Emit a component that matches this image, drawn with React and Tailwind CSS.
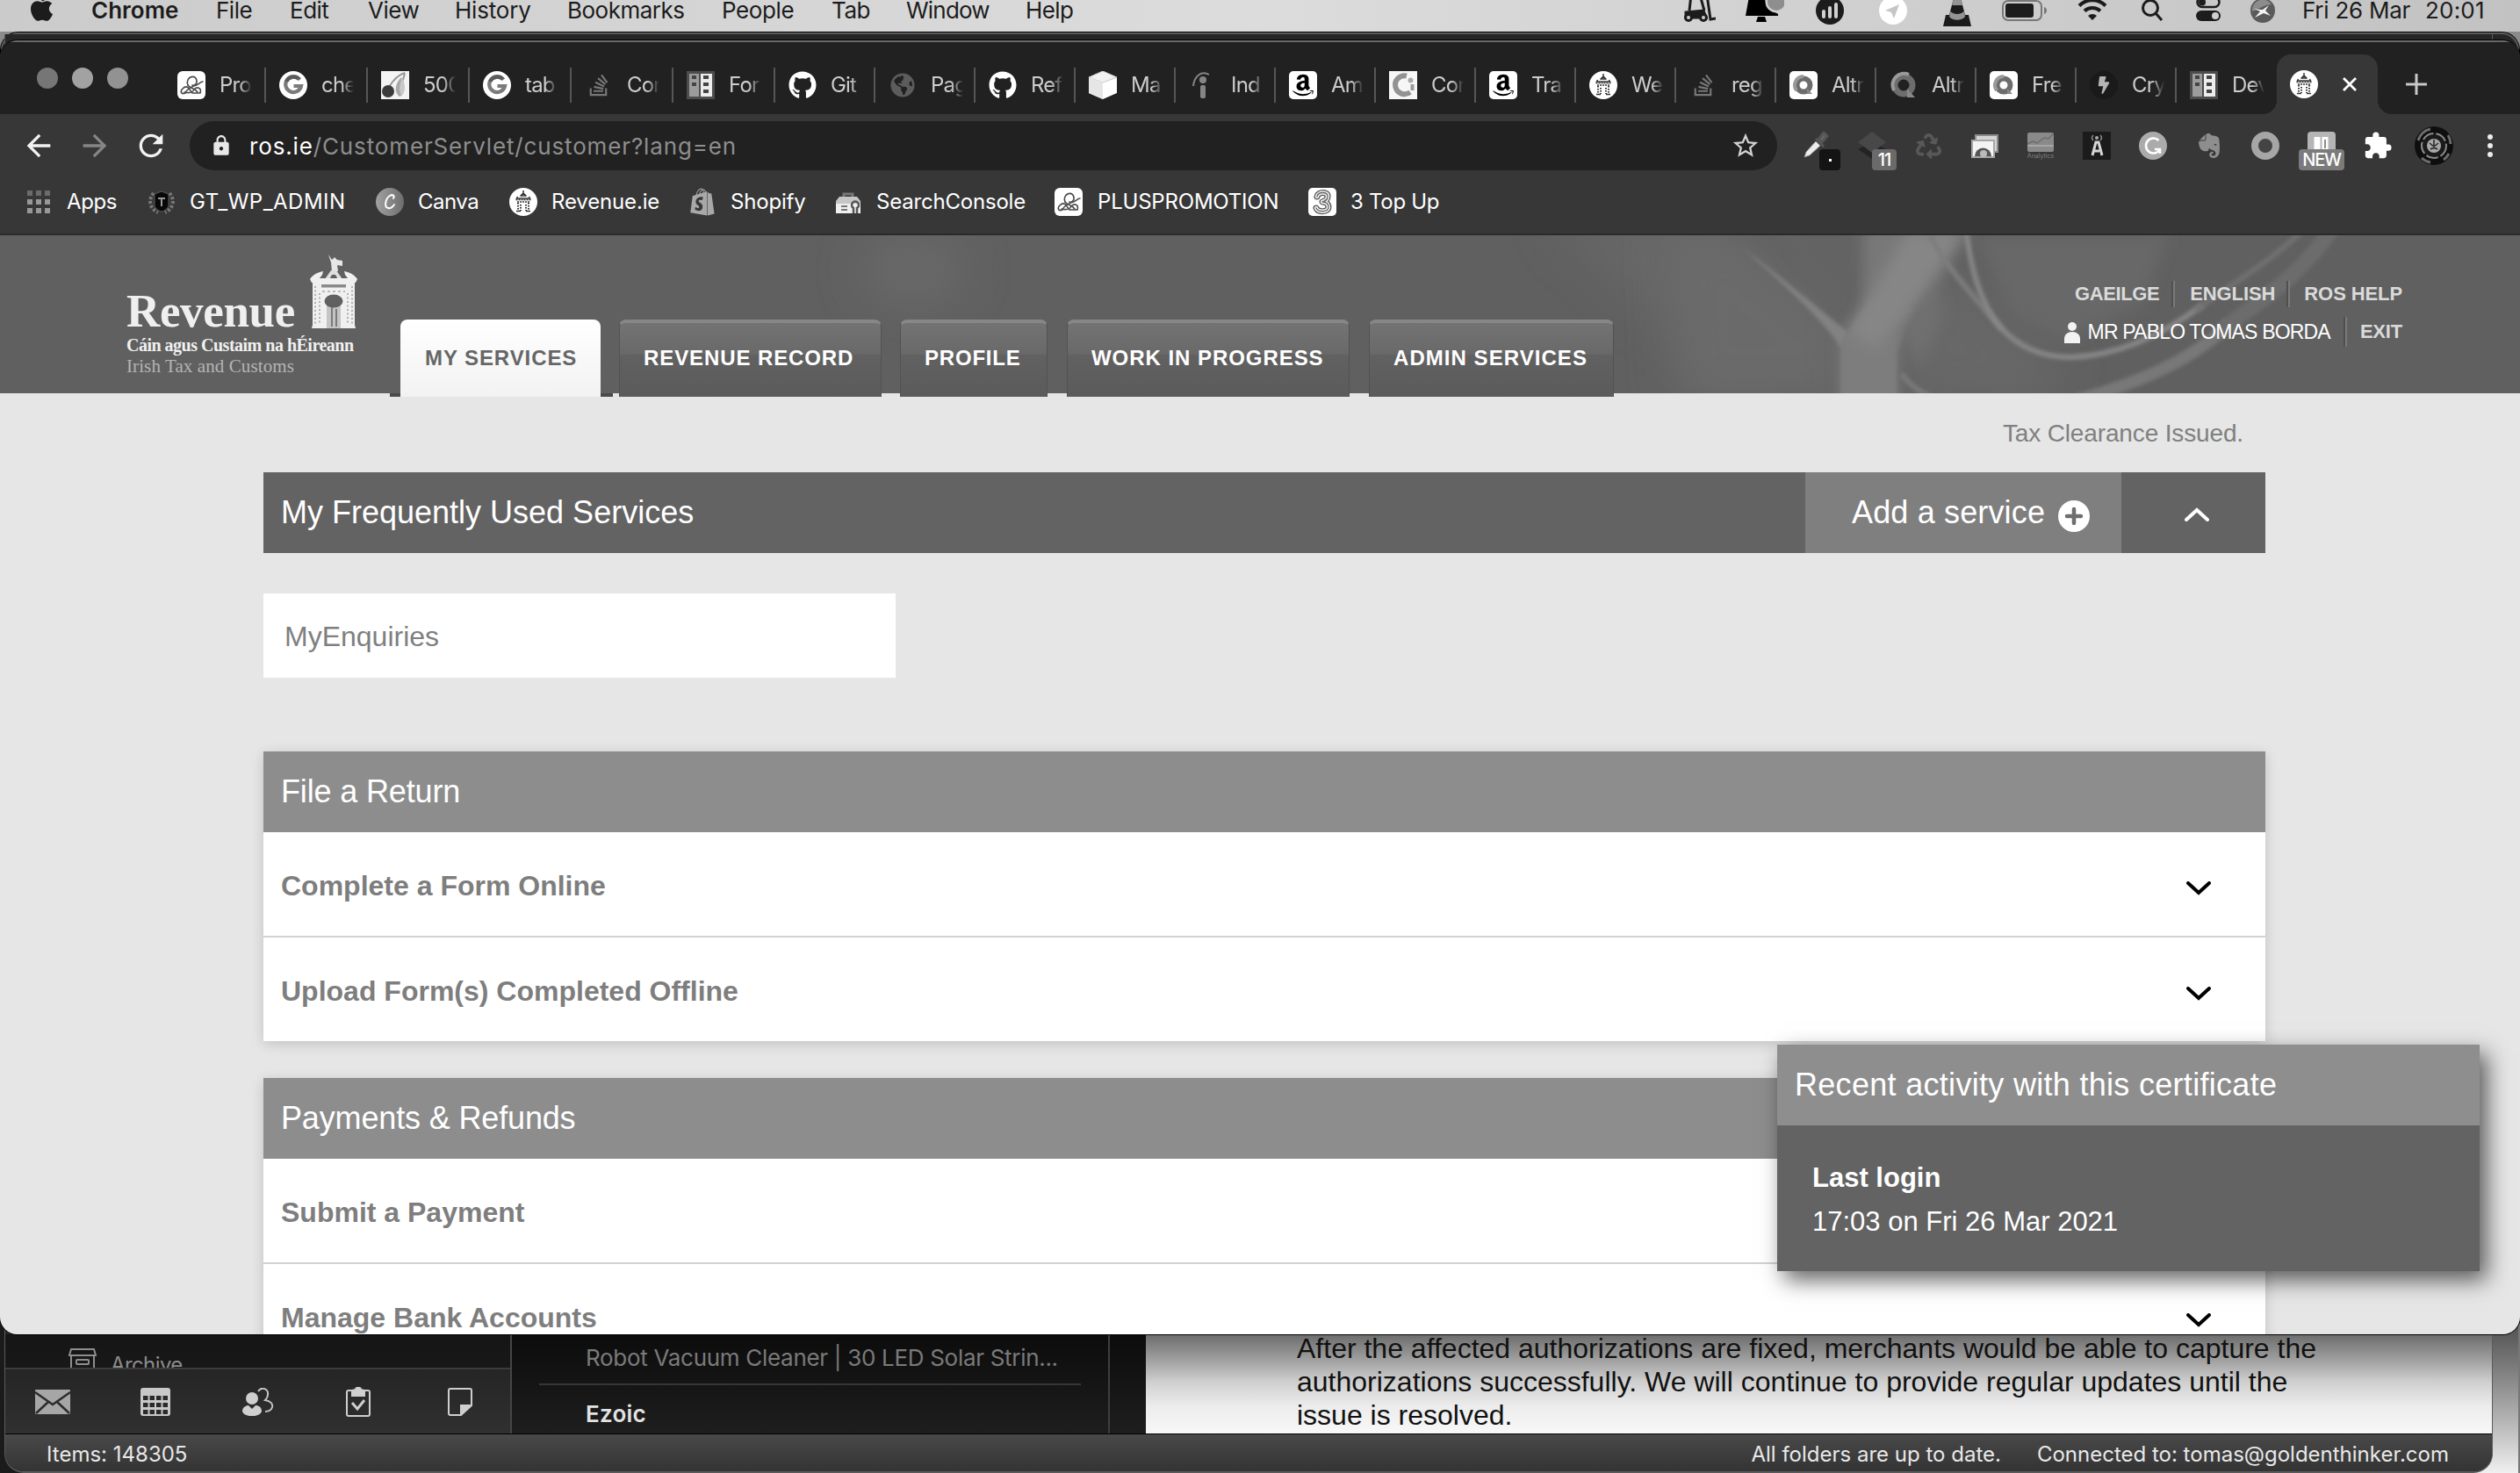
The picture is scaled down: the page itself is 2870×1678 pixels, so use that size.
import React from "react";
import {
  FaApple,
  FaGithub,
  FaStackOverflow,
  FaAmazon,
  FaRecycle,
  FaEvernote,
  FaShopify,
  FaBolt,
  FaGlobeAmericas,
} from "react-icons/fa";
import { MdArrowBack, MdArrowForward, MdRefresh, MdStarBorder, MdExtension, MdLock } from "react-icons/md";

/* ---------- drawings ---------- */

function Gate() {
  return (
    <span className="flex size-8 items-center justify-center rounded-full bg-white">
      <svg viewBox="0 0 32 32" className="size-8" fill="none" stroke="#333" strokeWidth="1.5">
        <path d="M16 3v4M12.500 9.500L16 6l3.500 3.500M9.500 10l-1 2h15l-1-2M13 9h6" />
        <path d="M7.500 13.500h17M9 16h14" strokeDasharray="2 1" />
        <path strokeDasharray="1.500 1.500" strokeWidth="2" d="M10 17v9M13 19v7M19 19v7M22 17v9" />
        <path d="M8 26.500h5M19 26.500h5" />
      </svg>
    </span>
  );
}

function Knot() {
  return (
    <svg viewBox="0 0 32 32" className="size-8">
      <rect width="32" height="32" rx="6" fill="#fff" />
      <g fill="none" stroke="#4a4a4a" strokeWidth="1.6" strokeLinecap="round" strokeLinejoin="round">
        <path d="M12 16c-4-10 11-14 10-3-1 5-12 6-13 12-5 2-6-2-3-5s6-3 8 1l3 4h9c2-6-4-8-7-4-2 4-7 4-11 3" />
        <path d="M17 16c5 3 8-4 12-4M12 16c3 4 8 3 11 8" />
      </g>
    </svg>
  );
}

function Google() {
  return (
    <svg viewBox="0 0 32 32" className="size-8">
      <circle cx="16" cy="16" r="16" fill="#fff" />
      <path d="M23.500 9.800A9 9 0 1 0 25 17h-8.500" fill="none" stroke="#7b7b7b" strokeWidth="4.200" />
      <path d="M8.200 12A9 9 0 0 1 22.500 9" fill="none" stroke="#5b5b5b" strokeWidth="4.200" />
    </svg>
  );
}

function Pear() {
  return (
    <svg viewBox="0 0 32 32" className="size-8">
      <rect width="32" height="32" fill="#f4f4f4" />
      <path d="M27 2C20 4 14 10 9 18M27 2c-1 6-3 10-4 14" stroke="#999" strokeWidth="2" fill="none" />
      <circle cx="8" cy="23" r="7" fill="#3b3b3b" />
      <path d="M23 7c-8 8-8 18-2 22 7-2 7-14 2-22z" fill="#a8a8a8" />
      <path d="M24 8c-3 6-4 14-1 20 5-4 5-12 1-20z" fill="#c9c9c9" />
    </svg>
  );
}

function Panels() {
  return (
    <svg viewBox="0 0 32 32" className="size-8">
      <rect width="32" height="32" fill="#4d4d4d" />
      <rect x="3" y="3" width="11" height="26" fill="#9c9c9c" />
      <rect x="16" y="3" width="13" height="26" fill="#ededed" />
      <g fill="#444">
        <rect x="6" y="5" width="5" height="4" />
        <rect x="6" y="13" width="5" height="4" />
        <rect x="19" y="5" width="6" height="4" />
        <rect x="19" y="13" width="6" height="4" />
        <rect x="19" y="21" width="6" height="4" />
      </g>
    </svg>
  );
}

function Cube() {
  return (
    <svg viewBox="0 0 32 32" className="size-8">
      <path d="M16 0l16 7v18l-16 7L0 25V7z" fill="#fff" />
      <path d="M0 7l16 6 16-6L16 0z" fill="#f2f2f2" stroke="#c6c6c6" />
      <path d="M0 7l16 6v19L0 25z" fill="#e6e6e6" />
    </svg>
  );
}

function Indeed() {
  return (
    <svg viewBox="0 0 32 32" className="size-8">
      <circle cx="16" cy="10" r="4" fill="#858585" />
      <rect x="13" y="16" width="6" height="15" rx="2" fill="#858585" />
      <path d="M5 17C6 6 14-1 23 4" fill="none" stroke="#858585" strokeWidth="2" />
    </svg>
  );
}

function Amazon() {
  return (
    <span className="flex size-8 items-center justify-center rounded-[5px] bg-white text-black">
      <FaAmazon className="size-[28px]" />
    </span>
  );
}

function CRing() {
  return (
    <svg viewBox="0 0 32 32" className="size-8">
      <rect width="32" height="32" fill="#f6f6f6" />
      <path d="M20 5.500A10.500 10.500 0 1 0 24 24" fill="none" stroke="#929292" strokeWidth="6" />
      <circle cx="24.500" cy="10.500" r="3" fill="#aaa" />
      <path d="M26.500 15v7" stroke="#999" strokeWidth="4" />
    </svg>
  );
}

function Swirl({ boxed }) {
  return (
    <svg viewBox="0 0 32 32" className="size-8">
      {boxed && <rect width="32" height="32" rx="5" fill="#fff" />}
      <circle cx="16" cy="16" r={boxed ? 7.5 : 10} fill="none" stroke="#6d6d6d" strokeWidth={boxed ? 6 : 7} />
      <path
        d={boxed ? "M8 22a10 10 0 0 1 8-16" : "M5 22A13 13 0 0 1 22 4"}
        fill="none"
        stroke="#9a9a9a"
        strokeWidth="4"
      />
      <path d={boxed ? "M20 20l6 6h-6z" : "M20 20l9 10h-9z"} fill="#888" />
    </svg>
  );
}

function Bolt() {
  return (
    <span className="flex size-8 items-center justify-center rounded-full bg-[#1a1a1a] text-[#b5b5b5]">
      <FaBolt className="size-[20px]" />
    </span>
  );
}

const favicons = {
  knot: <Knot />,
  google: <Google />,
  pear: <Pear />,
  stack: <FaStackOverflow className="size-[28px] text-[#777]" />,
  panels: <Panels />,
  github: <FaGithub className="size-8 text-white" />,
  globe: <FaGlobeAmericas className="size-[28px] text-[#5c5c5c]" />,
  cube: <Cube />,
  indeed: <Indeed />,
  amazon: <Amazon />,
  cring: <CRing />,
  gate: <Gate />,
  swirlBox: <Swirl boxed />,
  swirl: <Swirl />,
  bolt: <Bolt />,
};

/* ---------- macOS menu bar ---------- */

const menus = [
  ["File", "w-[84px] tracking-[-0.5px]"],
  ["Edit", "w-[89px] tracking-[-0.5px]"],
  ["View", "w-[99px] tracking-[-0.5px]"],
  ["History", "w-[128px] tracking-[-0.2px]"],
  ["Bookmarks", "w-[176px] tracking-[-0.5px]"],
  ["People", "w-[125px] tracking-[-0.4px]"],
  ["Tab", "w-[85px] tracking-[-0.5px]"],
  ["Window", "w-[136px] tracking-[-0.8px]"],
  ["Help", "w-[80px] tracking-[-0.6px]"],
];

function Slot({ className, children }) {
  return <div className={`flex shrink-0 items-center justify-center ${className}`}>{children}</div>;
}

function MenuBar() {
  return (
    <div className="h-9 w-full bg-linear-to-r from-[#cbcbcb] via-[#dcdcdc] to-[#c2c2c2]">
      <div className="flex h-6 items-center text-[26px] leading-[24px] text-[#1c1c1c]">
        <div className="flex w-[104px] shrink-0 pl-[33px]">
          <FaApple className="-mt-[6px] h-[34px] w-[29px]" />
        </div>
        <div className="w-[142px] font-semibold">Chrome</div>
        {menus.map(([m, c]) => (
          <div key={m} className={`shrink-0 ${c}`}>
            {m}
          </div>
        ))}
        <div className="ml-auto flex h-6 shrink-0 items-center">
          <Slot className="w-[72px]">
            <svg viewBox="0 0 36 32" className="-mt-1 h-8 w-9" fill="none" stroke="#1c1c1c" strokeWidth="3">
              <path d="M6 18L8 0h10l5 18M26 0l4 28 6-1" />
              <path d="M2 20l20-2 3 8H2z" fill="#1c1c1c" />
              <circle cx="5" cy="26" r="3.500" fill="#d0d0d0" />
              <circle cx="22" cy="26" r="3.500" fill="#d0d0d0" />
            </svg>
          </Slot>
          <Slot className="w-[76px]">
            <svg viewBox="0 0 44 32" className="h-8 w-11">
              <path d="M4 0h17l4 12 12 8v2H0z M14 23h8l2 6H12z" fill="#000" />
              <circle cx="35" cy="6" r="12.500" fill="#d0d0d0" />
              <circle cx="35" cy="6" r="10" fill="#8e8e8e" />
            </svg>
          </Slot>
          <Slot className="w-[71px]">
            <svg viewBox="0 0 32 32" className="size-8">
              <circle cx="16" cy="16" r="16" fill="#1c1c1c" />
              <path d="M9 17v6M16 13v10M23 9v14" stroke="#d0d0d0" strokeWidth="4" strokeLinecap="round" />
            </svg>
          </Slot>
          <Slot className="w-[73px]">
            <svg viewBox="0 0 32 32" className="size-8">
              <circle cx="16" cy="16" r="16" fill="#fff" />
              <path d="M7 16l16-7-6 16-3-7z" fill="#c6c6c6" />
            </svg>
          </Slot>
          <Slot className="w-[74px]">
            <svg viewBox="0 0 32 32" className="mt-1 size-8">
              <path d="M12 0h8l5 19h4l3 13H0l3-13h4z" fill="#1c1c1c" />
              <path d="M12 0h8l2 8H10zM8 15c5 4 11 4 16 0l1 6c-4 5-14 5-18 0z" fill="#949494" />
            </svg>
          </Slot>
          <Slot className="w-[80px]">
            <svg viewBox="0 0 52 24" className="h-6 w-[52px]">
              <rect x="1" y="1" width="44" height="22" rx="6" fill="none" stroke="#777" strokeWidth="2" />
              <rect x="4" y="4" width="32" height="16" rx="3" fill="#1c1c1c" />
              <path d="M48 8c4 1 4 7 0 8z" fill="#777" />
            </svg>
          </Slot>
          <Slot className="w-[73px]">
            <svg viewBox="0 0 34 26" className="-mt-1 h-[26px] w-[34px]" fill="none" stroke="#1c1c1c" strokeWidth="4">
              <path d="M2 9.500a21 21 0 0 1 30 0M8 15.500a13 13 0 0 1 18 0" />
              <path d="M17 26l-5-5a7 7 0 0 1 10 0z" fill="#1c1c1c" stroke="none" />
            </svg>
          </Slot>
          <Slot className="w-[64px]">
            <svg viewBox="0 0 26 26" className="h-[26px] w-[26px]" fill="none" stroke="#1c1c1c" strokeWidth="3">
              <circle cx="11" cy="10" r="8.500" />
              <path d="M17 16l7 8" />
            </svg>
          </Slot>
          <Slot className="w-[63px]">
            <svg viewBox="0 0 28 26" className="h-[26px] w-[28px]">
              <rect x="1.500" y="-2" width="25" height="11" rx="5.500" fill="none" stroke="#1c1c1c" strokeWidth="2.500" />
              <circle cx="7" cy="3.500" r="4" fill="#1c1c1c" />
              <rect y="13" width="28" height="12" rx="6" fill="#1c1c1c" />
              <circle cx="22" cy="19" r="4" fill="#d0d0d0" />
            </svg>
          </Slot>
          <Slot className="w-[76px] pr-[14px]">
            <svg viewBox="0 0 28 28" className="size-7">
              <circle cx="14" cy="14" r="14" fill="#5a5a5a" />
              <path d="M2 15a12 12 0 0 1 22-8c-7 0-12 4-22 8z" fill="#8c8c8c" />
              <path d="M14 13l7-5-4 6 6 6-8-3-10 5 6-7-7-3 8 1z" fill="#f4f4f4" />
            </svg>
          </Slot>
          <div className="w-[140px] tracking-[-0.25px]">Fri 26 Mar</div>
          <div className="w-[108px] tracking-[0.2px]">20:01</div>
        </div>
      </div>
    </div>
  );
}

/* ---------- Chrome window ---------- */

const tabs = [
  ["knot", "Pro", 1],
  ["google", "che", 1],
  ["pear", "500", 1],
  ["google", "tab", 1],
  ["stack", "Con", 1],
  ["panels", "For", 1],
  ["github", "Git", 0],
  ["globe", "Pag", 0],
  ["github", "Ref", 0],
  ["cube", "Ma", 0],
  ["indeed", "Ind", 0],
  ["amazon", "Am", 0],
  ["cring", "Con", 0],
  ["amazon", "Tra", 0],
  ["gate", "We", 0],
  ["stack", "reg", 0],
  ["swirlBox", "Altr", 0],
  ["swirl", "Altr", 0],
  ["swirlBox", "Fre", 0],
  ["bolt", "Cry", 0],
  ["panels", "Dev", 0],
];

function TabStrip() {
  return (
    <div className="flex h-[82px] shrink-0 items-end bg-[#212121]">
      <div className="flex h-[82px] w-[187px] shrink-0 gap-4 pt-[29px] pl-[42px]">
        <span className="size-6 rounded-full bg-[#767676]" />
        <span className="size-6 rounded-full bg-[#a2a2a2]" />
        <span className="size-6 rounded-full bg-[#929292]" />
      </div>
      {tabs.map(([icon, label, wide], i) => (
        <div
          key={i}
          className={`mb-[13px] flex h-[40px] shrink-0 items-center border-r-2 pl-[15px] ${wide ? "w-[116px]" : "w-[114px]"} ${
            i === tabs.length - 1 ? "border-transparent" : "border-[#565656]"
          }`}
        >
          <span className="flex size-8 shrink-0 items-center justify-center">{favicons[icon]}</span>
          <span className="ml-4 w-[37px] overflow-hidden text-[24px] leading-[32px] tracking-[-0.8px] whitespace-nowrap text-[#cdcdcd] mask-[linear-gradient(to_right,black_62%,transparent)]">
            {label}
          </span>
        </div>
      ))}
      <div className="relative flex h-[68px] w-[115px] shrink-0 items-center rounded-t-[16px] bg-[#373737] pl-[15px]">
        <span className="absolute bottom-0 -left-4 size-4 bg-[radial-gradient(circle_at_0_0,transparent_16px,#373737_16px)]" />
        <span className="absolute -right-4 bottom-0 size-4 bg-[radial-gradient(circle_at_100%_0,transparent_16px,#373737_16px)]" />
        <Gate />
        <svg viewBox="0 0 16 16" className="ml-[28px] size-4" stroke="#fff" strokeWidth="2.800">
          <path d="M1 1l14 14M15 1L1 15" />
        </svg>
      </div>
      <svg viewBox="0 0 24 24" className="mb-[22px] ml-[32px] size-6" stroke="#c8c8c8" strokeWidth="3">
        <path d="M12 0v24M0 12h24" />
      </svg>
    </div>
  );
}

function Badge({ className, children }) {
  return (
    <span
      className={`absolute bottom-0 flex h-6 items-center justify-center rounded-[4px] text-[20px] leading-[24px] font-medium text-white ${className}`}
    >
      {children}
    </span>
  );
}

function Extensions() {
  const cell = "relative flex h-14 w-16 shrink-0 items-center justify-center";
  return (
    <div className="ml-3 flex shrink-0">
      <div className={cell}>
        <svg viewBox="0 0 32 32" className="size-8">
          <path d="M16 8l9 9M19 9l6-8 4 4-6 7z" stroke="#555" fill="#666" strokeWidth="3" />
          <path d="M3 29l2-6L16 11l5 5L9 27z" fill="#ececec" stroke="#8a8a8a" />
        </svg>
        <Badge className="right-[4px] w-6 bg-[#141414]">
          <span className="size-[3px] bg-white" />
        </Badge>
      </div>
      <div className={cell}>
        <svg viewBox="0 0 32 32" className="size-8">
          <path d="M0 20l16-8 16 8-16 11z" fill="#242424" />
          <path d="M16 0l16 12-16 12L0 12z" fill="#484848" />
        </svg>
        <Badge className="right-[4px] w-7 bg-[#6a6a6a] tracking-[-1px]">11</Badge>
      </div>
      <div className={cell}>
        <FaRecycle className="size-[29px] text-[#585858]" />
      </div>
      <div className={cell}>
        <svg viewBox="0 0 32 32" className="size-8">
          <rect x="6" y="4" width="25" height="19" fill="#d5d5d5" stroke="#8c8c8c" strokeWidth="2" />
          <rect x="2" y="10" width="25" height="19" fill="#f4f4f4" stroke="#a6a6a6" strokeWidth="2" />
          <path d="M5 28a9 9 0 0 1 19 0z" fill="#555" />
          <circle cx="15" cy="25" r="4" fill="#bbb" />
        </svg>
      </div>
      <div className={`${cell} flex-col`}>
        <svg viewBox="0 0 30 22" className="h-[22px] w-[30px]">
          <rect width="30" height="22" rx="2" fill="#8a8a8a" />
          <path d="M0 13l6-3 5 2 8-6 5 1 6-6" stroke="#6c6c6c" fill="none" strokeWidth="1.500" />
          <path d="M0 15h30" stroke="#c2c2c2" />
        </svg>
        <span className="text-[7px] leading-[9px] text-[#808080]">Analytics</span>
      </div>
      <div className={cell}>
        <svg viewBox="0 0 32 32" className="size-8">
          <rect width="32" height="32" fill="#1b1b1b" />
          <path d="M11 27l4-15h3l4 15M13 22h6" fill="none" stroke="#d6d6d6" strokeWidth="3" />
          <circle cx="16" cy="7" r="2" fill="#aaa" />
          <path d="M12 4c-2 2-2 4 0 6M20 4c2 2 2 4 0 6" fill="none" stroke="#8c8c8c" strokeWidth="1.500" />
        </svg>
      </div>
      <div className={cell}>
        <svg viewBox="0 0 32 32" className="size-8">
          <circle cx="16" cy="16" r="16" fill="#ababab" />
          <path d="M22.500 10A8.500 8.500 0 1 0 24 20M18 20h6v5" fill="none" stroke="#fff" strokeWidth="2.600" />
        </svg>
      </div>
      <div className={cell}>
        <FaEvernote className="size-8 text-[#8e8e8e]" />
      </div>
      <div className={cell}>
        <span className="size-8 rounded-full border-[8px] border-[#a6a6a6] bg-[#444]" />
      </div>
      <div className={cell}>
        <svg viewBox="0 0 32 32" className="size-8">
          <rect width="32" height="32" rx="4" fill="#b5b5b5" />
          <path d="M11 6v16M20 6v16" stroke="#fff" strokeWidth="7" />
          <path d="M20 9v10" stroke="#8d8d8d" strokeWidth="2" />
        </svg>
        <Badge className="right-[6px] w-[52px] bg-[#7b7b7b] tracking-[-1.300px]">NEW</Badge>
      </div>
      <div className={cell}>
        <MdExtension className="size-[34px] text-white" />
      </div>
      <div className={cell}>
        <svg viewBox="0 0 44 44" className="size-11">
          <circle cx="22" cy="22" r="22" fill="#0e0e0e" />
          <path d="M4 16A19 19 0 0 1 18 3M38 10a19 19 0 0 1 3 10M8 36a19 19 0 0 0 10 5M33 38a19 19 0 0 0 6-7" fill="none" stroke="#6c6c6c" strokeWidth="3" />
          <circle cx="22" cy="22" r="14" fill="#1a1a1a" stroke="#8a8a8a" strokeWidth="2" strokeDasharray="14 3" />
          <circle cx="22" cy="22" r="8" fill="#a8a8a8" />
          <path d="M17 19l5 4 5-4M18 26c3-2 5-2 8 0M22 15v7" stroke="#2c2c2c" strokeWidth="1.600" fill="none" />
        </svg>
      </div>
      <div className={cell}>
        <svg viewBox="0 0 6 26" className="h-[26px] w-[6px]" fill="#ececec">
          <circle cx="3" cy="3" r="3" />
          <circle cx="3" cy="13" r="3" />
          <circle cx="3" cy="23" r="3" />
        </svg>
      </div>
    </div>
  );
}

function Toolbar() {
  return (
    <div className="flex h-[72px] shrink-0 items-center">
      <div className="flex w-[216px] shrink-0 items-center gap-[24px] pl-[24px] text-[#f2f2f2]">
        <MdArrowBack className="size-10" />
        <MdArrowForward className="size-10 text-[#858585]" />
        <MdRefresh className="size-10" />
      </div>
      <div className="flex h-14 w-[1808px] shrink-0 items-center rounded-full bg-[#212121] pr-[19px] pl-[23px]">
        <MdLock className="size-[26px] text-[#e8e8e8]" />
        <div className="ml-[19px] pt-px text-[26px] leading-[40px] tracking-[0.86px] text-[#8e8e8e]">
          <span className="text-white">ros.ie</span>/CustomerServlet/customer?lang=en
        </div>
        <MdStarBorder className="ml-auto size-[34px] text-[#d2d2d2]" />
      </div>
      <Extensions />
    </div>
  );
}

function AppsGrid() {
  const dots = [0, 1, 2, 3, 4, 5, 6, 7, 8];
  return (
    <span className="grid w-[26px] grid-cols-3 gap-x-1 gap-y-[4px]">
      {dots.map((d) => (
        <span key={d} className={`h-[6px] w-[6px] ${d < 3 ? "bg-[#6b6b6b]" : "bg-[#989898]"}`} />
      ))}
    </span>
  );
}

const bookmarks = [
  { w: "w-[140px]", t: "Apps", c: "tracking-[-0.4px]", icon: <AppsGrid /> },
  {
    w: "w-[260px]",
    t: "GT_WP_ADMIN",
    c: "tracking-[0.48px]",
    icon: (
      <svg viewBox="0 0 32 32" className="size-8">
        <path d="M7 6C0 14 3 24 12 28M25 6c7 8 4 18-5 22" fill="none" stroke="#777" strokeWidth="4" strokeDasharray="3 2" />
        <path d="M8 7l8-3 8 3v12c0 4-4 7-8 8-4-1-8-4-8-8z" fill="#080808" stroke="#5c5c5c" />
        <path d="M12 12h8M16 12v9" stroke="#999" strokeWidth="2" />
      </svg>
    ),
  },
  {
    w: "w-[152px]",
    t: "Canva",
    c: "tracking-[-0.5px]",
    icon: (
      <span className="flex size-8 items-center justify-center rounded-full bg-linear-to-r from-[#a2a2a2] to-[#6e6e6e]">
        <svg viewBox="0 0 32 32" className="size-8" fill="none" stroke="#fff" strokeWidth="2" strokeLinecap="round">
          <path d="M20 12c2-3-1-5-4-3-5 3-7 13-2 14 3 1 5-1 7-4" />
        </svg>
      </span>
    ),
  },
  { w: "w-[204px]", t: "Revenue.ie", c: "tracking-[-0.15px]", icon: <Gate /> },
  { w: "w-[166px]", t: "Shopify", c: "tracking-[-0.2px]", icon: <FaShopify className="size-8 text-[#a8a8a8]" /> },
  {
    w: "w-[251px]",
    t: "SearchConsole",
    c: "tracking-[-0.2px]",
    icon: (
      <svg viewBox="0 0 32 32" className="size-8">
        <path d="M11 11V7h10v4" fill="none" stroke="#777" strokeWidth="3" />
        <path d="M6 10h20l4 5v5H2v-5z" fill="#c6c6c6" />
        <path d="M2 18h28v11H2z" fill="#f0f0f0" />
        <path d="M8 21h7M8 25h7" stroke="#777" strokeWidth="2" />
        <path d="M22 29v-6a4 4 0 1 1 4 0v6" fill="none" stroke="#555" strokeWidth="2.500" />
      </svg>
    ),
  },
  { w: "w-[289px]", t: "PLUSPROMOTION", c: "pl-px tracking-[-0.2px]", icon: <Knot /> },
  {
    w: "w-[160px]",
    t: "3 Top Up",
    c: "tracking-[-0.3px]",
    icon: (
      <svg viewBox="0 0 32 32" className="size-8">
        <rect width="32" height="32" rx="5" fill="#fff" />
        <g fill="none" strokeLinecap="round" strokeLinejoin="round">
          <path d="M10 10c1-6 13-6 12 0 0 4-3 5-6 6 4 0 7 2 7 6 0 6-12 6-14 1" stroke="#555" strokeWidth="7" />
          <path d="M10 10c1-6 13-6 12 0 0 4-3 5-6 6 4 0 7 2 7 6 0 6-12 6-14 1" stroke="#f2f2f2" strokeWidth="4.500" />
          <path d="M10 10c1-6 13-6 12 0 0 4-3 5-6 6 4 0 7 2 7 6 0 6-12 6-14 1" stroke="#666" strokeWidth="1.300" />
        </g>
      </svg>
    ),
  },
];

function BookmarksBar() {
  return (
    <div className="flex h-[66px] shrink-0 items-start border-b-2 border-[#2a2a2a] pt-[12px] pl-[28px]">
      {bookmarks.map((b) => (
        <div key={b.t} className={`flex shrink-0 items-center gap-4 ${b.w}`}>
          <span className="flex size-8 shrink-0 items-center justify-center">{b.icon}</span>
          <span className={`text-[24px] leading-[32px] whitespace-nowrap text-white ${b.c}`}>{b.t}</span>
        </div>
      ))}
    </div>
  );
}

/* ---------- Revenue page ---------- */

function HeaderArt() {
  return (
    <svg viewBox="0 0 1970 180" className="absolute top-0 left-[900px] h-[180px] w-[1970px]">
      <defs>
        <filter id="mist" x="-60%" y="-60%" width="220%" height="220%">
          <feGaussianBlur stdDeviation="26" />
        </filter>
        <filter id="soft" x="-30%" y="-30%" width="160%" height="160%">
          <feGaussianBlur stdDeviation="8" />
        </filter>
        <filter id="fine" x="-20%" y="-20%" width="140%" height="140%">
          <feGaussianBlur stdDeviation="2.200" />
        </filter>
      </defs>
      <ellipse cx="140" cy="40" rx="60" ry="40" fill="#6c6c6c" filter="url(#mist)" opacity=".8" />
      <path d="M860 -20h200l60 180h-60z" fill="#6a6a6a" filter="url(#mist)" opacity=".7" />
      <g transform="translate(1010 0)">
        <path d="M-10 -10L75 0l120 100v90H0z" fill="#6a6a6a" filter="url(#mist)" />
        <path d="M100 -10h110v110h-20z" fill="#646464" filter="url(#soft)" />
        <path d="M260 0l180 150-20 40H250z" fill="#686868" filter="url(#mist)" />
        <path d="M340 0h220l-30 80-90 40-60-30z" fill="#676767" filter="url(#soft)" />
        <path d="M211 -10h125L252 118v80h-66v-84l25-30z" fill="#787878" filter="url(#soft)" />
        <path d="M186 124v70h64v-60l20-50-50-10z" fill="#7d7d7d" filter="url(#fine)" />
        <path d="M250 110l44-60 10 40-26 60z" fill="#6f6f6f" filter="url(#soft)" />
        <path d="M74 14c40 30 76 60 120 96l-7 18C160 90 120 55 74 14z" fill="#828282" filter="url(#fine)" />
        <path d="M262 -5h64l-50 75-50 60-30-20z" fill="#868686" filter="url(#soft)" />
        <path d="M288 0c20 40 60 80 82 108" stroke="#7d7d7d" strokeWidth="6" fill="none" filter="url(#fine)" />
        <path
          d="M329 -4c8 50 22 142 120 143c60-2 110-30 150-60"
          stroke="#878787"
          strokeWidth="6"
          fill="none"
          filter="url(#fine)"
        />
        <path d="M590 86c50-36 85-56 121-90" stroke="#717171" strokeWidth="6" fill="none" filter="url(#fine)" />
        <path
          d="M455 188c70-20 130-44 175-88"
          stroke="#787878"
          strokeWidth="14"
          fill="none"
          filter="url(#fine)"
        />
        <path d="M620 108c50-38 90-62 128-118" stroke="#6c6c6c" strokeWidth="18" fill="none" filter="url(#fine)" />
        <path d="M256 158c8 12 18 20 34 26" stroke="#7b7b7b" strokeWidth="5" fill="none" filter="url(#fine)" />
      </g>
    </svg>
  );
}

function GateLogo() {
  return (
    <svg viewBox="0 0 54 84" className="h-[84px] w-[54px]">
      <path d="M21 0l4 6 3-3 3 3 6 1v6l-6-1 1 7h-7l-1-10z" fill="#e6e6e6" />
      <path d="M17 28l7-10h6l7 10h-6c0-7-8-7-8 0z" fill="#dedede" />
      <path d="M0 28c3-5 9-8 15-9l-1 4-3 4h32l-3-4-1-4c6 1 12 4 15 9l-2 4H2z" fill="#f0f0f0" />
      <path d="M3 31h48v49l1 4H35V60H19v24H2l1-4z" fill="#f0f0f0" />
      <rect x="13" y="34" width="28" height="3.500" fill="#8a8a8a" />
      <path d="M14 42h26" stroke="#b8b8b8" strokeWidth="2" strokeDasharray="3 3" />
      <path d="M19 56h16v28H19z" fill="#c4c4c4" />
      <ellipse cx="27" cy="53" rx="10.500" ry="7.500" fill="#606060" />
      <path d="M25 60v22M30 62v20" stroke="#7a7a7a" strokeWidth="2" />
      <path
        d="M6 36v44M11 44v36M43 44v36M48 36v44"
        stroke="#b0b0b0"
        strokeWidth="2"
        strokeDasharray="2 2.500"
        fill="none"
      />
    </svg>
  );
}

function Logo() {
  return (
    <div className="flex w-[300px] shrink-0 flex-col pt-[22px] font-['Liberation_Serif',serif]">
      <div className="flex h-[84px] items-end">
        <div className="w-[209px] pb-[2px] text-[53px] leading-[36px] font-bold tracking-[-0.35px] text-[#efefef]">
          Revenue
        </div>
        <GateLogo />
      </div>
      <div className="mt-[8px] text-[20px] leading-[22px] font-bold tracking-[-0.5px] whitespace-nowrap text-[#f0f0f0]">
        Cáin agus Custaim na hÉireann
      </div>
      <div className="mt-[2px] text-[21px] leading-[22px] tracking-[0.1px] whitespace-nowrap text-[#b4b4b4]">
        Irish Tax and Customs
      </div>
    </div>
  );
}

const navTabs = [
  ["REVENUE RECORD", "w-[299px] ml-[7px] tracking-[0.9px]"],
  ["PROFILE", "w-[168px] ml-[21px] tracking-[0.8px]"],
  ["WORK IN PROGRESS", "w-[322px] ml-[22px] tracking-[0.95px]"],
  ["ADMIN SERVICES", "w-[279px] ml-[22px] tracking-[1.05px]"],
];

function Divider({ className }) {
  return <span className={`w-[4px] border-r-2 border-l-2 border-r-[#7a7a7a] border-l-[#505050] ${className}`} />;
}

function SiteHeader() {
  return (
    <div className="relative h-[180px] shrink-0 bg-[#606060]">
      <HeaderArt />
      <div className="relative flex h-[184px] pl-[144px]">
        <Logo />
        <div className="flex items-end text-[24px] leading-[88px] font-bold whitespace-nowrap">
          <span className="h-1 w-3 bg-[#4b4b4b]" />
          <div className="h-[88px] w-[228px] rounded-t-[8px] bg-linear-to-b from-white to-[#f2f2f2] pl-[28px] tracking-[0.92px] text-[#666]">
            MY SERVICES
          </div>
          <span className="h-1 w-[14px] bg-[#4b4b4b]" />
          {navTabs.map(([t, c]) => (
            <div
              key={t}
              className={`h-[88px] rounded-t-[8px] border-x border-t-4 border-x-[#525252] border-t-[#878787] bg-[linear-gradient(to_bottom,#737373,#696969_42%,#616161_43%,#5b5b5b)] pl-[27px] leading-[80px] text-white ${c}`}
            >
              {t}
            </div>
          ))}
        </div>
        <div className="mt-[51px] mr-[134px] ml-auto flex flex-col items-end text-[22px] leading-[30px] font-bold text-[#dadada]">
          <div className="flex h-[32px] items-center">
            <span className="tracking-[-0.4px]">GAEILGE</span>
            <Divider className="ml-[14px] h-[30px]" />
            <span className="ml-[17px] tracking-[-0.1px]">ENGLISH</span>
            <Divider className="ml-[13px] h-[30px]" />
            <span className="ml-[16px] tracking-[-0.1px]">ROS HELP</span>
          </div>
          <div className="mt-[9px] flex h-[36px] items-center">
            <svg viewBox="0 0 18 24" className="mt-[2px] h-6 w-[18px]" fill="#f2f2f2">
              <circle cx="9" cy="5" r="5" />
              <path d="M0 24v-5c0-5 4-8 9-8s9 3 9 8v5z" />
            </svg>
            <span className="ml-[9px] text-[23px] font-normal tracking-[-0.82px] text-white">MR PABLO TOMAS BORDA</span>
            <Divider className="ml-[15px] h-[34px]" />
            <span className="ml-[15px] tracking-[-0.2px]">EXIT</span>
          </div>
        </div>
      </div>
    </div>
  );
}

function Chevron({ up, className }) {
  return (
    <svg viewBox="0 0 28 16" className={`h-4 w-7 ${className}`} fill="none" strokeWidth="4" stroke="currentColor">
      <path d={up ? "M2 14L14 3l12 11" : "M2 2l12 11L26 2"} strokeLinecap="round" />
    </svg>
  );
}

function Row({ title, last }) {
  return (
    <div
      className={`flex items-center justify-between pr-[62px] pl-5 ${last ? "h-[118px]" : "h-[120px] border-b-2 border-[#d2d2d2]"}`}
    >
      <span className="pt-1 text-[32px] leading-[40px] font-bold text-[#7e7e7e]">{title}</span>
      <Chevron className="mt-[10px] text-black" />
    </div>
  );
}

function Section({ title, rows, className }) {
  return (
    <div className={`w-[2280px] shrink-0 bg-white shadow-[0_3px_14px_rgba(0,0,0,0.16)] ${className}`}>
      <div className="h-[92px] bg-[#8d8d8d] pl-5 text-[36px] leading-[92px] tracking-[-0.15px] text-white">{title}</div>
      {rows.map((r, i) => (
        <Row key={r} title={r} last={i === rows.length - 1} />
      ))}
    </div>
  );
}

function RecentActivity() {
  return (
    <div className="absolute top-[1144px] left-[2024px] w-[800px] bg-[#636363] font-['Liberation_Sans',Arial,sans-serif] text-white shadow-[8px_10px_24px_rgba(0,0,0,0.62)]">
      <div className="h-[92px] bg-[#8e8e8e] pl-5 text-[36px] leading-[92px] tracking-[0.3px]">
        Recent activity with this certificate
      </div>
      <div className="h-[166px] pt-[35px] pl-[40px] text-[31px] leading-[50px]">
        <div className="font-bold">Last login</div>
        <div>17:03 on Fri 26 Mar 2021</div>
      </div>
    </div>
  );
}

function RevenuePage() {
  return (
    <div className="flex min-h-0 flex-1 flex-col overflow-hidden bg-[#e6e6e6] font-['Liberation_Sans',Arial,sans-serif]">
      <SiteHeader />
      <div className="mt-[26px] flex h-10 shrink-0 justify-end pr-[315px] text-[28px] leading-[40px] tracking-[-0.14px] text-[#808080]">
        Tax Clearance Issued.
      </div>
      <div className="mt-[24px] flex flex-col pl-[300px]">
        <div className="flex h-[92px] w-[2280px] shrink-0 bg-[#636363] text-[36px] leading-[92px] text-white">
          <div className="flex-1 pl-5">My Frequently Used Services</div>
          <div className="flex w-[360px] items-center bg-[#7f7f7f] pl-[53px]">
            <span className="tracking-[0.15px]">Add a service</span>
            <svg viewBox="0 0 36 36" className="mt-2 ml-[15px] size-9">
              <circle cx="18" cy="18" r="18" fill="#fff" />
              <path d="M18 10v16M10 18h16" stroke="#6e6e6e" strokeWidth="4.500" strokeLinecap="round" />
            </svg>
          </div>
          <div className="flex w-[164px] items-center pl-[72px]">
            <Chevron up className="mt-1" />
          </div>
        </div>
        <div className="mt-[46px] h-[96px] w-[720px] shrink-0 bg-white pl-6 text-[32px] leading-[98px] text-[#7f7f7f]">
          MyEnquiries
        </div>
        <Section className="mt-[84px]" title="File a Return" rows={["Complete a Form Online", "Upload Form(s) Completed Offline"]} />
        <Section className="mt-[42px]" title="Payments & Refunds" rows={["Submit a Payment", "Manage Bank Accounts"]} />
      </div>
    </div>
  );
}

function ChromeWindow() {
  return (
    <div className="absolute top-[46px] left-0 flex h-[1474px] w-[2870px] flex-col overflow-hidden rounded-[20px] bg-[#373737] shadow-[0_0_0_1px_#000]">
      <div className="h-[2px] shrink-0 bg-[#6a6a6a]" />
      <TabStrip />
      <Toolbar />
      <BookmarksBar />
      <RevenuePage />
      <RecentActivity />
    </div>
  );
}

/* ---------- mail window behind ---------- */

function MailWindow() {
  return (
    <div className="absolute top-[39px] left-[5px] flex h-[1639px] w-[2834px] flex-col overflow-hidden rounded-b-[22px] border-x border-b-2 border-[#5a5a5a] bg-[#262626] pt-[1481px]">
      <div className="flex h-[113px] shrink-0">
        <div className="flex w-[577px] shrink-0 flex-col border-r-2 border-[#454545] bg-linear-to-b from-[#151515] to-[#1f1f1f]">
          <div className="flex h-[40px] overflow-hidden border-b-2 border-[#3c3c3c] pt-[16px] pl-[72px]">
            <svg viewBox="0 0 32 28" className="h-7 w-8" fill="none" stroke="#8e8e8e" strokeWidth="2">
              <path d="M3 1h26l2 7H1zM3 8v20M29 8v20" />
              <rect x="9" y="13" width="14" height="5" rx="1" />
            </svg>
            <span className="ml-[16px] text-[24px] leading-[38px] tracking-[-0.6px] text-[#8c8c8c]">Archive</span>
          </div>
          <div className="flex h-[73px] items-center bg-linear-to-b from-[#252525] to-[#303030] pl-[34px]">
            <svg viewBox="0 0 40 28" className="h-7 w-10">
              <rect width="40" height="28" rx="1" fill="#a6a6a6" />
              <path d="M0 3l20 14L40 3M1 27l14-13M39 27L25 14" fill="none" stroke="#2c2c2c" strokeWidth="2.500" />
            </svg>
            <svg viewBox="0 0 34 32" className="ml-[80px] h-8 w-[34px]">
              <rect width="34" height="32" rx="3" fill="#c8c8c8" />
              <g fill="#2a2a2a">
                {[9, 17, 25].map((y) =>
                  [3, 10.5, 18, 25.5].map((x) => <rect key={`${x}-${y}`} x={x} y={y} width="5.500" height="5" />)
                )}
              </g>
            </svg>
            <svg viewBox="0 0 36 32" className="ml-[82px] h-8 w-9">
              <circle cx="11" cy="12" r="7" fill="#cfcfcf" />
              <path d="M0 27c0-5 4-7 7-7l4 4 4-4c4 0 7 2 7 7-2 7-20 7-22 0z" fill="#cfcfcf" />
              <path d="M18 4c4-6 12-3 11 4 0 3-1 4-3 6 6 1 9 4 8 8-1 3-4 5-8 5" fill="none" stroke="#c4c4c4" strokeWidth="2" />
            </svg>
            <svg viewBox="0 0 28 34" className="ml-[82px] h-[34px] w-7" fill="none" stroke="#cfcfcf" strokeWidth="2">
              <rect x="1" y="4" width="26" height="29" rx="2" />
              <path d="M7 4l4-1c0-3 6-3 6 0l4 1v6H7z" fill="#cfcfcf" />
              <path d="M7 18l6 7 8-10" strokeWidth="3" />
            </svg>
            <svg viewBox="0 0 28 32" className="ml-[88px] h-8 w-7">
              <path d="M1 3q0-2 2-2h22q2 0 2 2v17L15 31H3q-2 0-2-2z" fill="none" stroke="#cfcfcf" strokeWidth="2" />
              <path d="M14 32V19h13z" fill="#cfcfcf" />
            </svg>
          </div>
        </div>
        <div className="flex w-[681px] shrink-0 flex-col border-r-2 border-[#3e3e3e] bg-linear-to-b from-[#0c0c0c] to-[#1e1e1e] pl-[31px]">
          <div className="mt-[10px] h-[48px] w-[617px] border-b-2 border-[#363636] pl-[53px] text-[26px] leading-[34px] tracking-[-0.3px] whitespace-nowrap text-[#7a7a7a]">
            Robot Vacuum Cleaner | 30 LED Solar Strin...
          </div>
          <div className="mt-[15px] pl-[53px] text-[26px] leading-[36px] font-semibold tracking-[0.2px] text-[#e2e2e2]">
            Ezoic
          </div>
        </div>
        <div className="w-[41px] shrink-0 bg-linear-to-b from-[#0c0c0c] to-[#1e1e1e]" />
        <div className="flex flex-1 flex-col bg-[linear-gradient(to_bottom,#6c6c6c,#a2a2a2_27%,#cfcfcf_48%,#ececec_72%,#f8f8f8)] pl-[172px] font-['Liberation_Sans',Arial,sans-serif] text-[32px] leading-[38px] whitespace-nowrap text-[#111]">
          <div className="-mt-[3px]">After the affected authorizations are fixed, merchants would be able to capture the</div>
          <div>authorizations successfully. We will continue to provide regular updates until the</div>
          <div>issue is resolved.</div>
        </div>
      </div>
      <div className="flex flex-1 items-center border-t border-black bg-linear-to-b from-[#494949] to-[#343434] pt-[3px] pr-[49px] pl-[47px] text-[24px] leading-[38px] text-[#e8e8e8]">
        <span>Items: 148305</span>
        <span className="ml-auto">All folders are up to date.</span>
        <span className="ml-[41px]">Connected to: tomas@goldenthinker.com</span>
      </div>
    </div>
  );
}

export default function App() {
  return (
    <div className="relative h-[1678px] w-[2870px] overflow-hidden bg-[#1b1b1b] font-[Inter,sans-serif]">
      <MenuBar />
      <div className="absolute top-[36px] left-0 h-20 w-full bg-[#8a8a8a]" />
      <div className="absolute top-[37px] left-[1px] h-[100px] w-[2868px] rounded-t-[20px] border-2 border-[#5a5a5a] bg-[#262626] shadow-[0_0_0_1px_#000]" />
      <div className="absolute top-[1500px] right-0 h-[178px] w-[60px] border-r-2 border-[#777] bg-linear-to-b from-[#4a4a4a] to-[#f0f0f0]" />
      <MailWindow />
      <ChromeWindow />
    </div>
  );
}
